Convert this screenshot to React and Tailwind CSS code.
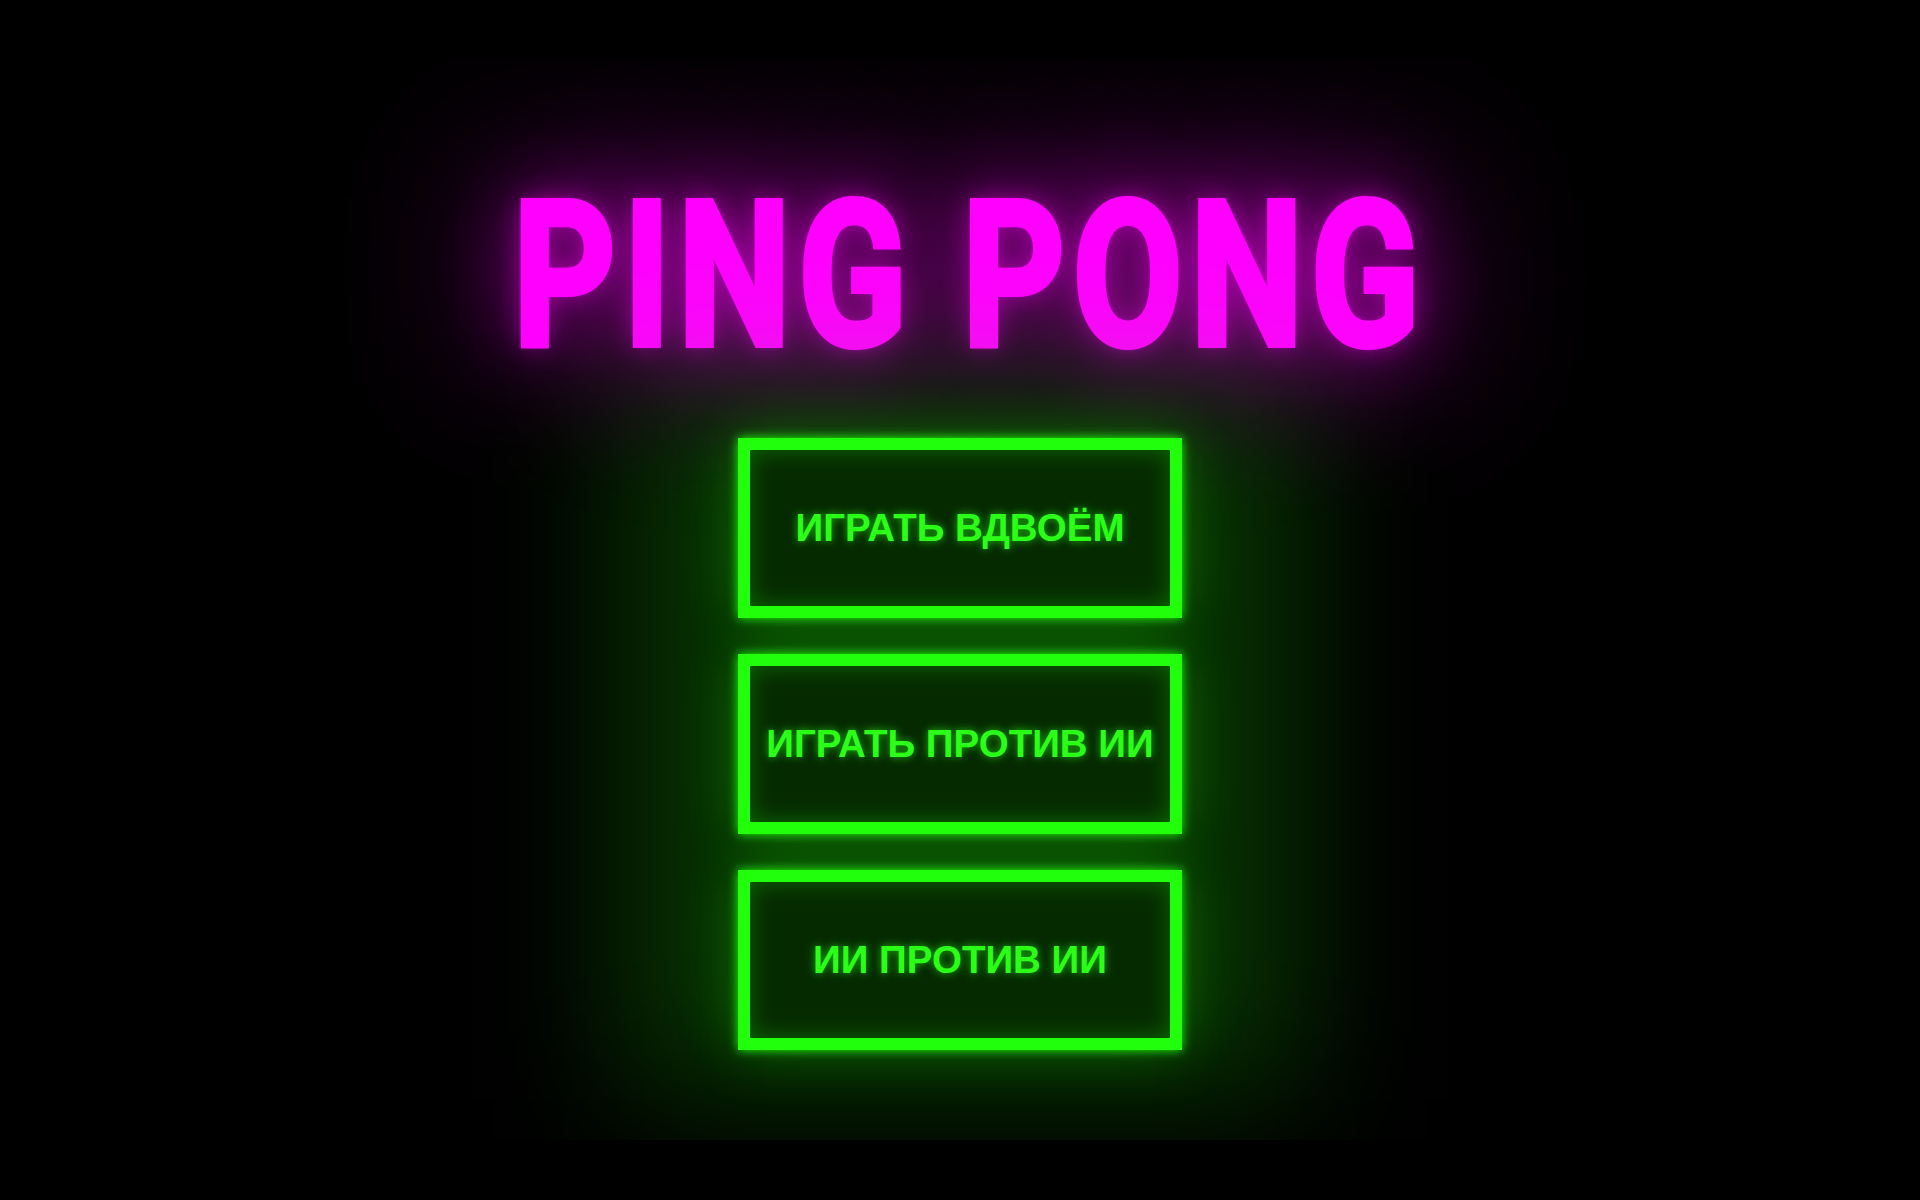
const modes = ['ИГРАТЬ ВДВОЁМ', 'ИГРАТЬ ПРОТИВ ИИ', 'ИИ ПРОТИВ ИИ'];

function MenuButton({ label }) {
  return (
    <button
      className="w-[444px] h-[180px] flex items-center justify-center border-[12px] border-[#22ff0c] bg-[#062a00] shadow-[0_0_10px_#22ff0c,0_0_60px_rgba(34,255,12,0.3),inset_0_0_24px_rgba(34,255,12,0.3)] font-['Liberation_Sans',Arial,sans-serif] font-bold text-[38.5px] text-[#2bff18] [text-shadow:0_0_8px_rgba(43,255,24,0.7)] whitespace-nowrap"
    >
      {label}
    </button>
  );
}

export default function App() {
  return (
    <div className="min-h-screen w-full bg-black pt-[58px]">
      <div className="w-full h-[1082px] overflow-hidden flex flex-col items-center pt-[117px]">
        {/* Title */}
        <h1 className="w-full pl-[26px] text-center whitespace-nowrap font-['Roboto',sans-serif] font-bold text-[203px] leading-none tracking-[10px] text-[#ff00ff] [-webkit-text-stroke:6px_#ff00ff] scale-x-[0.785] [text-shadow:0_0_6px_#ff00ff,0_0_30px_rgba(255,0,255,0.5),0_0_90px_rgba(255,0,255,0.5),0_0_200px_#ff00ff]">
          PING PONG
        </h1>

        {/* Modes, with the green halo behind them */}
        <div className="relative isolate mt-[60px] flex flex-col gap-[36px] before:absolute before:-inset-x-[120px] before:-inset-y-[50px] before:-z-10 before:bg-[rgba(34,255,12,0.2)] before:blur-[70px]">
          {modes.map((m) => (
            <MenuButton key={m} label={m} />
          ))}
        </div>
      </div>
    </div>
  );
}
